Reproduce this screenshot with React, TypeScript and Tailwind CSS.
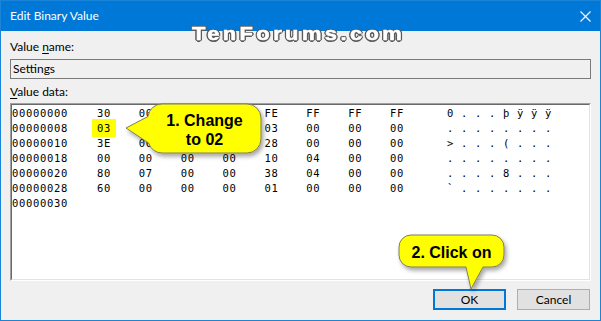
import React from "react";

// cells hidden under the first callout are left blank
const rows = [
  { addr: "00000000", hex: ["30", "00", "", "", "FE", "FF", "FF", "FF"], ascii: "0...þÿÿÿ" },
  { addr: "00000008", hex: ["03", "", "", "", "03", "00", "00", "00"], ascii: "........" },
  { addr: "00000010", hex: ["3E", "00", "", "", "28", "00", "00", "00"], ascii: ">...(..." },
  { addr: "00000018", hex: ["00", "00", "00", "00", "10", "04", "00", "00"], ascii: "........" },
  { addr: "00000020", hex: ["80", "07", "00", "00", "38", "04", "00", "00"], ascii: "....8..." },
  { addr: "00000028", hex: ["60", "00", "00", "00", "01", "00", "00", "00"], ascii: "`......." },
  { addr: "00000030", hex: [], ascii: "" },
];

function Callouts() {
  return (
    <svg className="absolute inset-0 pointer-events-none" width="601" height="321" viewBox="0 0 601 321">
      <defs>
        <filter id="sh" x="-20%" y="-20%" width="140%" height="150%">
          <feDropShadow dx="2" dy="3" stdDeviation="2" floodColor="#000" floodOpacity="0.35" />
        </filter>
      </defs>
      <path
        d="M161 103 H246 A14 14 0 0 1 260 117 V138 A14 14 0 0 1 246 152 H161 A14 14 0 0 1 147.6 142 L125 127 L147 115.5 A14 14 0 0 1 161 103 Z"
        fill="#ffff00"
        stroke="#7d7d5a"
        strokeWidth="1"
        filter="url(#sh)"
      />
      <path
        d="M410 234 H491 A12 12 0 0 1 503 246 V254 A12 12 0 0 1 491 266 H482 L470 288 L465 266 H410 A12 12 0 0 1 398 254 V246 A12 12 0 0 1 410 234 Z"
        fill="#ffff00"
        stroke="#7d7d5a"
        strokeWidth="1"
        filter="url(#sh)"
      />
    </svg>
  );
}

export default function App() {
  return (
    <div className="relative w-[601px] h-[321px] bg-[#f0f0f0] border border-[#1a84d8] flex flex-col overflow-hidden font-['Lato',sans-serif] text-[12px] text-black">
      {/* Title bar */}
      <div className="h-[30px] shrink-0 bg-[#0078d7] flex items-center justify-between pl-[9px] pr-[9px] text-white">
        <span className="leading-[16px]">Edit Binary Value</span>
        <svg width="11" height="11" viewBox="0 0 11 11">
          <path d="M0.5 0.5 L10.5 10.5 M10.5 0.5 L0.5 10.5" stroke="#fff" strokeWidth="1.1" />
        </svg>
      </div>

      <div className="flex flex-col px-[9px]">
        <div className="mt-[8px] leading-[16px]">
          Value <span className="underline underline-offset-2">n</span>ame:
        </div>
        <div className="mt-[4px] h-[20px] border border-[#7a7a7a] bg-[#f0f0f0] flex items-center pl-[2px]">Settings</div>
        <div className="mt-[5px] leading-[16px]">
          <span className="underline underline-offset-2">V</span>alue data:
        </div>

        {/* Hex editor */}
        <div className="mt-[3px] h-[178px] border border-t-[#a0a0a0] border-l-[#a0a0a0] border-b-white border-r-white">
          <div className="h-full bg-white border border-t-[#696969] border-l-[#696969] border-b-[#e3e3e3] border-r-[#e3e3e3] pt-[1px] font-['DejaVu_Sans_Mono',monospace] text-[10.5px] tracking-[0.68px]">
            {rows.map((r) => (
              <div key={r.addr} className="flex h-[15px] items-center whitespace-pre">
                <span className="w-[85px]">{r.addr}</span>
                {r.hex.map((h, i) => (
                  <span key={i} className="w-[41.86px]">
                    {r.addr === "00000008" && i === 0 ? (
                      <span className="bg-[#ffff00] px-[5px] -ml-[5px] py-[3px]">{h}</span>
                    ) : (
                      h
                    )}
                  </span>
                ))}
                {r.ascii && <span className="ml-[15px]">{r.ascii.split("").join(" ")}</span>}
              </div>
            ))}
          </div>
        </div>

        {/* Buttons */}
        <div className="mt-[8px] flex justify-end gap-[11px] pr-[1px]">
          <button className="w-[73px] h-[21px] bg-[#e1e1e1] border-2 border-[#0078d7] flex items-center justify-center leading-none">
            OK
          </button>
          <button className="w-[73px] h-[21px] bg-[#e1e1e1] border border-[#adadad] flex items-center justify-center leading-none">
            Cancel
          </button>
        </div>
      </div>

      {/* Watermark */}
      <div className="absolute left-[191px] top-[21px] origin-left scale-x-[1.15] font-['Liberation_Sans',sans-serif] font-bold text-[19px] leading-[23px] tracking-[3px] text-white [-webkit-text-stroke:0.6px_#fff] [text-shadow:1.5px_0_0_#5a5a5a,-1.5px_0_0_#5a5a5a,0_1.5px_0_#5a5a5a,0_-1.5px_0_#5a5a5a,1px_1px_0_#5a5a5a,-1px_-1px_0_#5a5a5a,1px_-1px_0_#5a5a5a,-1px_1px_0_#5a5a5a]">
        TenForums.com
      </div>

      <Callouts />

      <div className="absolute left-[147px] top-[110px] w-[113px] text-center font-['Liberation_Sans',sans-serif] font-bold text-[16px] leading-[19px]">
        1. Change
        <br />
        to 02
      </div>
      <div className="absolute left-[398px] top-[242px] w-[105px] text-center font-['Liberation_Sans',sans-serif] font-bold text-[16px] leading-[19px]">
        2. Click on
      </div>
    </div>
  );
}
